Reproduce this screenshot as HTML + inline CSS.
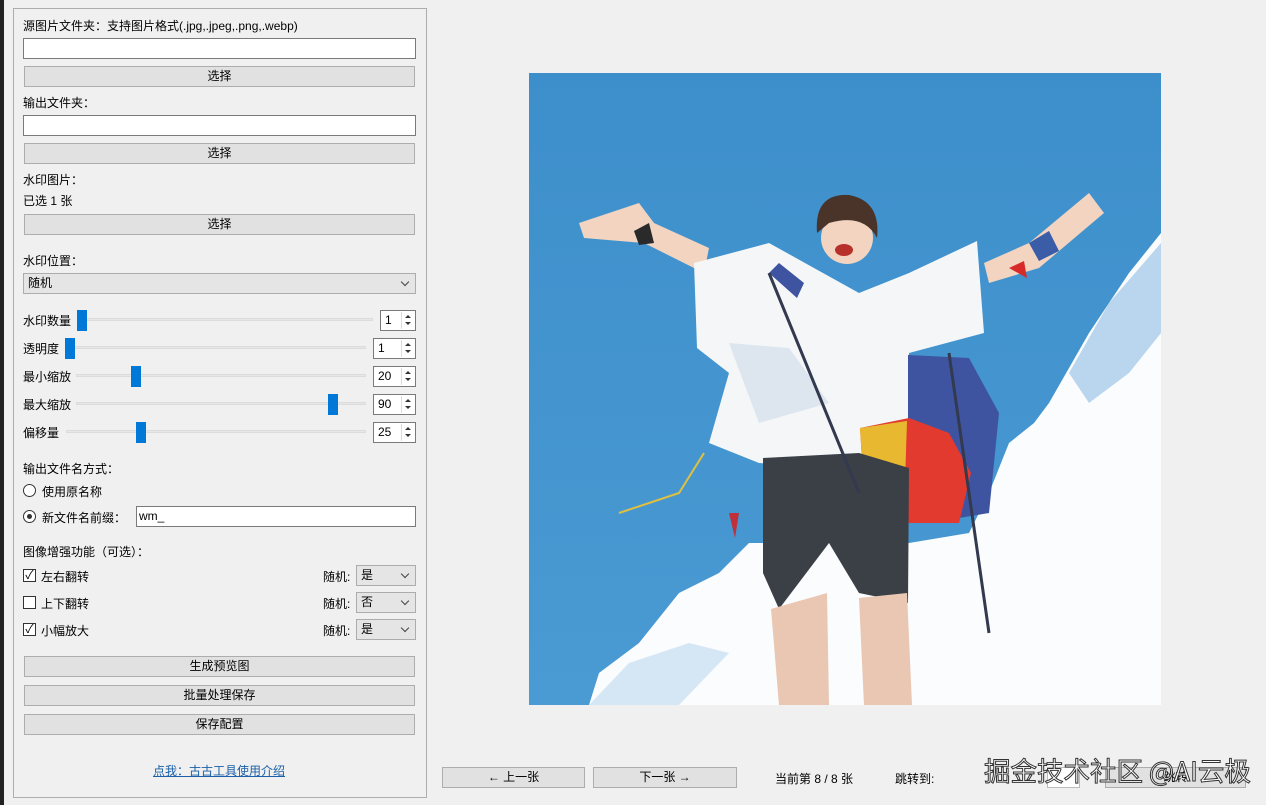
<!DOCTYPE html>
<html><head><meta charset="utf-8"><style>
*{box-sizing:border-box;margin:0;padding:0}
body{width:1266px;height:805px;background:#f0f0f0;position:relative;overflow:hidden;font-family:"Liberation Sans","Microsoft YaHei","Noto Sans CJK SC",sans-serif;font-size:12px;color:#000}
.a{position:absolute;white-space:nowrap}
.panel{position:absolute;left:13px;top:8px;width:414px;height:790px;border:1px solid #adadad}
.inp{position:absolute;background:#fff;border:1px solid #7a7a7a}
.btn{position:absolute;background:#e1e1e1;border:1px solid #adadad;text-align:center;line-height:18px}
.combo{position:absolute;background:#e5e5e5;border:1px solid #acacac;line-height:18px;padding-left:4px}
.combo:after{content:"";position:absolute;right:7px;top:5px;width:5px;height:5px;border-right:1px solid #444;border-bottom:1px solid #444;transform:rotate(45deg)}
.track{position:absolute;height:3px;background:#e7e7e7;border:1px solid #dcdcdc}
.thumb{position:absolute;width:10px;height:21px;background:#0078d7}
.spin{position:absolute;background:#fff;border:1px solid #7a7a7a;height:21px;padding-left:4px;line-height:19px}
.spin i{position:absolute;right:1px;top:1px;width:13px;height:17px;border-left:1px solid #ddd}
.spin i:before{content:"";position:absolute;left:3px;top:3px;border:3px solid transparent;border-bottom:3px solid #333;border-top:0}
.spin i:after{content:"";position:absolute;left:3px;top:10px;border:3px solid transparent;border-top:3px solid #333;border-bottom:0}
.chk{position:absolute;width:13px;height:13px;border:1px solid #333;background:#fff;font-size:12px;line-height:11px;text-align:center}
.rad{position:absolute;width:13px;height:13px;border:1px solid #333;border-radius:50%;background:#fff}
</style></head><body>
<div class="a" style="left:0;top:0;width:4px;height:805px;background:#222"></div>
<div class="panel"></div>
<div class="a" style="left:23px;top:17px">源图片文件夹：支持图片格式(.jpg,.jpeg,.png,.webp)</div>
<div class="inp" style="left:23px;top:38px;width:393px;height:21px"></div>
<div class="btn" style="left:24px;top:66px;width:391px;height:21px">选择</div>
<div class="a" style="left:23px;top:94px">输出文件夹：</div>
<div class="inp" style="left:23px;top:115px;width:393px;height:21px"></div>
<div class="btn" style="left:24px;top:143px;width:391px;height:21px">选择</div>
<div class="a" style="left:23px;top:171px">水印图片：</div>
<div class="a" style="left:23px;top:192px">已选 1 张</div>
<div class="btn" style="left:24px;top:214px;width:391px;height:21px">选择</div>
<div class="a" style="left:23px;top:252px">水印位置：</div>
<div class="combo" style="left:23px;top:273px;width:393px;height:21px">随机</div>

<div class="a" style="left:23px;top:312px">水印数量</div>
<div class="track" style="left:85px;top:318px;width:288px"></div><div class="thumb" style="left:77px;top:310px"></div>
<div class="spin" style="left:380px;top:310px;width:36px">1<i></i></div>
<div class="a" style="left:23px;top:340px">透明度</div>
<div class="track" style="left:66px;top:346px;width:300px"></div><div class="thumb" style="left:65px;top:338px"></div>
<div class="spin" style="left:373px;top:338px;width:43px">1<i></i></div>
<div class="a" style="left:23px;top:368px">最小缩放</div>
<div class="track" style="left:76px;top:374px;width:290px"></div><div class="thumb" style="left:131px;top:366px"></div>
<div class="spin" style="left:373px;top:366px;width:43px">20<i></i></div>
<div class="a" style="left:23px;top:396px">最大缩放</div>
<div class="track" style="left:76px;top:402px;width:290px"></div><div class="thumb" style="left:328px;top:394px"></div>
<div class="spin" style="left:373px;top:394px;width:43px">90<i></i></div>
<div class="a" style="left:23px;top:424px">偏移量</div>
<div class="track" style="left:66px;top:430px;width:300px"></div><div class="thumb" style="left:136px;top:422px"></div>
<div class="spin" style="left:373px;top:422px;width:43px">25<i></i></div>

<div class="a" style="left:23px;top:460px">输出文件名方式：</div>
<div class="rad" style="left:23px;top:484px"></div><div class="a" style="left:42px;top:483px">使用原名称</div>
<div class="rad" style="left:23px;top:510px"><div style="position:absolute;left:3px;top:3px;width:5px;height:5px;border-radius:50%;background:#333"></div></div>
<div class="a" style="left:42px;top:509px">新文件名前缀：</div>
<div class="inp" style="left:136px;top:506px;width:280px;height:21px;padding-left:2px;line-height:19px">wm_</div>
<div class="a" style="left:23px;top:543px">图像增强功能（可选）：</div>
<div class="chk" style="left:23px;top:569px">✓</div><div class="a" style="left:41px;top:568px">左右翻转</div>
<div class="a" style="left:323px;top:568px">随机:</div><div class="combo" style="left:356px;top:565px;width:60px;height:21px">是</div>
<div class="chk" style="left:23px;top:596px"></div><div class="a" style="left:41px;top:595px">上下翻转</div>
<div class="a" style="left:323px;top:595px">随机:</div><div class="combo" style="left:356px;top:592px;width:60px;height:21px">否</div>
<div class="chk" style="left:23px;top:623px">✓</div><div class="a" style="left:41px;top:622px">小幅放大</div>
<div class="a" style="left:323px;top:622px">随机:</div><div class="combo" style="left:356px;top:619px;width:60px;height:21px">是</div>
<div class="btn" style="left:24px;top:656px;width:391px;height:21px">生成预览图</div>
<div class="btn" style="left:24px;top:685px;width:391px;height:21px">批量处理保存</div>
<div class="btn" style="left:24px;top:714px;width:391px;height:21px">保存配置</div>
<div class="a" style="left:153px;top:762px;color:#1a5fa8;text-decoration:underline">点我：古古工具使用介绍</div>

<svg class="a" style="left:529px;top:73px" width="632" height="632" viewBox="0 0 632 632">
<defs><linearGradient id="s" x1="0" y1="0" x2="0" y2="1"><stop offset="0" stop-color="#3d8fcb"/><stop offset="1" stop-color="#4a9ad3"/></linearGradient></defs>
<rect width="632" height="632" fill="url(#s)"/>
<path d="M632 160 L600 200 L560 260 L520 330 L505 350 L480 370 L460 420 L440 460 L380 470 L300 470 L220 470 L190 500 L150 520 L110 570 L70 600 L60 632 L632 632Z" fill="#fafcfe"/>
<path d="M632 170 L580 230 L540 300 L560 330 L600 300 L632 260Z" fill="#b9d6ee"/>
<path d="M60 632 L100 590 L160 570 L200 580 L150 632Z" fill="#d5e6f4"/>
<path d="M50 150 L110 130 L125 150 L180 175 L175 200 L115 170 L55 165Z" fill="#f2d4c0"/>
<path d="M455 190 L500 170 L560 120 L575 140 L510 195 L460 210Z" fill="#f2d4c0"/>
<path d="M500 170 L520 158 L530 178 L510 188Z" fill="#3b5da8"/>
<path d="M105 158 L120 150 L125 170 L110 172Z" fill="#2a2a2a"/>
<path d="M165 190 L240 170 L330 220 L380 200 L448 168 L455 260 L380 280 L380 380 L300 395 L230 390 L180 370 L200 300 L168 275Z" fill="#f4f6f8"/>
<path d="M200 270 L260 275 L300 330 L230 350Z" fill="#dde6ee"/>
<circle cx="318" cy="165" r="26" fill="#f2d4c0"/>
<path d="M288 160 Q285 120 320 122 Q352 128 348 165 Q335 140 300 150Z" fill="#4a3328"/>
<ellipse cx="315" cy="177" rx="9" ry="6" fill="#b8302a"/>
<path d="M379 282 L440 285 L470 340 L460 440 L400 450 L379 420Z" fill="#3e54a0"/>
<path d="M331 355 L380 345 L420 360 L442 400 L430 450 L380 450 L335 420Z" fill="#e23a2e"/>
<path d="M331 355 L378 348 L375 440 L335 420Z" fill="#e8b830"/>
<path d="M234 385 L330 380 L380 395 L379 530 L330 520 L300 470 L250 536 L234 500Z" fill="#3b3f46"/>
<path d="M242 536 L298 520 L300 632 L250 632Z" fill="#e9c7b2"/>
<path d="M330 525 L378 520 L383 632 L335 632Z" fill="#e9c7b2"/>
<path d="M240 200 L250 190 L275 210 L268 225Z" fill="#3e54a0"/>
<path d="M480 195 L495 188 L498 205Z" fill="#d92a2a"/>
<path d="M200 440 L210 440 L206 465Z" fill="#c0303a"/>
<path d="M90 440 L150 420 L175 380" stroke="#e0c040" stroke-width="2" fill="none"/>
<path d="M240 200 L330 420 M420 280 L460 560" stroke="#333a50" stroke-width="3" fill="none"/>
</svg>

<div class="btn" style="left:442px;top:767px;width:143px;height:21px">← 上一张</div>
<div class="btn" style="left:593px;top:767px;width:144px;height:21px">下一张 →</div>
<div class="a" style="left:775px;top:770px">当前第 8 / 8 张</div>
<div class="a" style="left:895px;top:770px">跳转到:</div>
<div class="inp" style="left:1047px;top:767px;width:33px;height:21px;border-color:#bbb"></div>
<div class="btn" style="left:1105px;top:767px;width:141px;height:21px">跳转</div>
<div class="a" style="left:984px;top:750px;font-size:26.5px;color:#fff;-webkit-text-stroke:1px #333;font-family:'Noto Sans CJK SC',sans-serif">掘金技术社区 @AI云极</div>
</body></html>
